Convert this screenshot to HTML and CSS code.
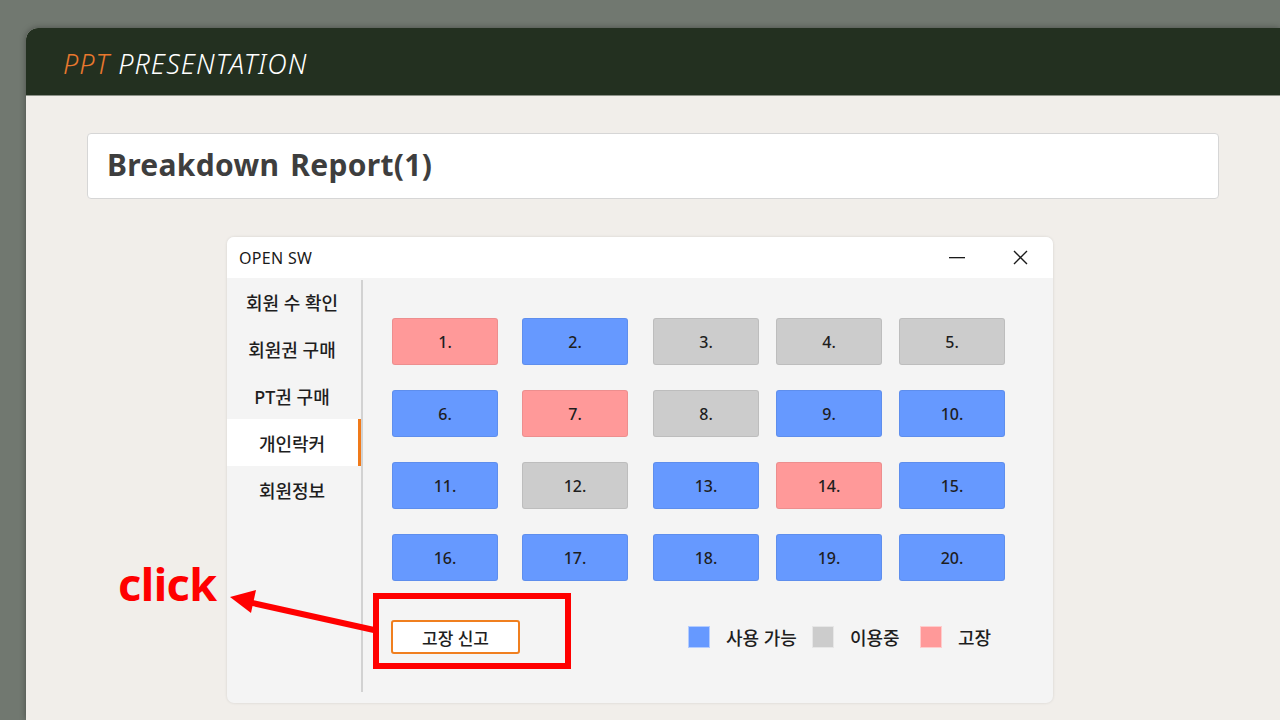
FILE: index.html
```html
<!DOCTYPE html>
<html lang="ko">
<head>
<meta charset="utf-8">
<title>PPT PRESENTATION</title>
<link rel="stylesheet" href="styles.css">
</head>
<body>
<div class="slide">
  <header class="slide-header">
    <h1 class="brand"><span class="brand-accent">PPT</span> PRESENTATION</h1>
  </header>
  <main class="slide-body">
    <div class="title-card">
      <h2 class="title">Breakdown Report(1)</h2>
    </div>
    <section class="window">
      <div class="titlebar">
        <span class="app-name">OPEN SW</span>
        <div class="controls">
          <svg class="ctl-min" width="16" height="2" viewBox="0 0 16 2"><rect x="0" y="0" width="16" height="1.3" fill="#1a1a1a"/></svg>
          <svg class="ctl-close" width="15" height="15" viewBox="0 0 15 15"><path d="M1 1 L14 14 M14 1 L1 14" stroke="#1a1a1a" stroke-width="1.4" fill="none"/></svg>
        </div>
      </div>
      <div class="win-body">
        <nav class="sidebar">
          <div class="nav-item">회원 수 확인</div>
          <div class="nav-item">회원권 구매</div>
          <div class="nav-item">PT권 구매</div>
          <div class="nav-item active">개인락커</div>
          <div class="nav-item">회원정보</div>
        </nav>
        <div class="divider"></div>
        <div class="main">
          <div class="locker-grid">
            <div class="locker broken">1.</div>
            <div class="locker free">2.</div>
            <div class="locker used">3.</div>
            <div class="locker used">4.</div>
            <div class="locker used">5.</div>
            <div class="locker free">6.</div>
            <div class="locker broken">7.</div>
            <div class="locker used">8.</div>
            <div class="locker free">9.</div>
            <div class="locker free">10.</div>
            <div class="locker free">11.</div>
            <div class="locker used">12.</div>
            <div class="locker free">13.</div>
            <div class="locker broken">14.</div>
            <div class="locker free">15.</div>
            <div class="locker free">16.</div>
            <div class="locker free">17.</div>
            <div class="locker free">18.</div>
            <div class="locker free">19.</div>
            <div class="locker free">20.</div>
          </div>
          <div class="bottom-row">
            <button class="report-btn">고장 신고</button>
            <div class="legend">
              <span class="swatch free"></span><span class="legend-label l1">사용 가능</span>
              <span class="swatch used"></span><span class="legend-label l2">이용중</span>
              <span class="swatch broken"></span><span class="legend-label">고장</span>
            </div>
          </div>
        </div>
      </div>
    </section>
  </main>
</div>

<div class="annot-box"></div>
<svg class="annot-arrow" width="1280" height="720" viewBox="0 0 1280 720">
  <line x1="248" y1="602" x2="374" y2="630" stroke="#ff0000" stroke-width="6"/>
  <polygon points="230,597 256,590 251,613" fill="#ff0000"/>
</svg>
<div class="annot-text">click</div>
</body>
</html>
```

FILE: styles.css
```css
* { box-sizing: border-box; }

html, body {
  margin: 0;
  padding: 0;
  width: 1280px;
  height: 720px;
  overflow: hidden;
}

body {
  background: #717870;
  font-family: "Noto Sans", "Noto Sans CJK KR", sans-serif;
  color: #1e1e1e;
}

.slide {
  margin: 28px 0 0 26px;
  height: 692px;
  background: #f1eeea;
  border-top-left-radius: 12px;
  overflow: hidden;
  box-shadow: 0 0 6px rgba(0, 0, 0, 0.35);
}

.slide-header {
  height: 68px;
  background: #233020;
  border-bottom: 1px solid #8d9289;
  display: flex;
  align-items: center;
  padding-left: 37px;
  padding-top: 4px;
}

.brand {
  margin: 0;
  font-size: 27px;
  font-weight: 300;
  font-style: italic;
  color: #ffffff;
  letter-spacing: 1.1px;
  line-height: 1;
}

.brand-accent { color: #e8782e; }

.slide-body {
  padding: 37px 61px 0 61px;
}

.title-card {
  height: 66px;
  background: #ffffff;
  border: 1px solid #d6d6d6;
  border-radius: 4px;
  display: flex;
  align-items: center;
  padding-left: 19px;
}

.title {
  margin: 0;
  font-size: 30px;
  font-weight: 700;
  color: #3e3e3e;
  line-height: 1;
  letter-spacing: 0.3px;
  word-spacing: 3px;
  padding-bottom: 2px;
}

.window {
  margin: 38px 0 0 140px;
  width: 826px;
  height: 466px;
  background: #f4f4f4;
  border-radius: 7px;
  overflow: hidden;
  box-shadow: 0 0 3px rgba(0, 0, 0, 0.12);
}

.titlebar {
  height: 41px;
  background: #ffffff;
  display: flex;
  align-items: center;
  justify-content: space-between;
  padding: 0 25px 0 12px;
}

.app-name {
  font-size: 16px;
  color: #1a1a1a;
  letter-spacing: 0.3px;
}

.controls {
  display: flex;
  align-items: center;
  gap: 48px;
}

.ctl-min { margin-top: 1px; }

.win-body {
  display: flex;
  height: 425px;
}

.sidebar {
  width: 134px;
  display: flex;
  flex-direction: column;
}

.nav-item {
  height: 47px;
  display: flex;
  align-items: center;
  justify-content: center;
  font-size: 18px;
  font-weight: 500;
  color: #1e1e1e;
  padding-right: 4px;
}

.nav-item.active {
  background: #ffffff;
  border-right: 3px solid #f07a1a;
  padding-right: 1px;
}

.divider {
  width: 2px;
  background: #d2d2d2;
  margin: 2px 0 11px 0;
}

.main {
  flex: 1;
  padding: 40px 0 0 29px;
}

.locker-grid {
  display: grid;
  grid-template-columns: 130px 131px 123px 123px 106px;
  grid-auto-rows: 47px;
  row-gap: 25px;
}

.locker {
  width: 106px;
  height: 47px;
  border-radius: 3px;
  border: 1px solid rgba(0, 0, 0, 0.07);
  display: flex;
  align-items: center;
  justify-content: center;
  font-size: 16px;
  font-weight: 500;
  color: #1e1e1e;
}

.free { background: #6699ff; }
.used { background: #cccccc; }
.broken { background: #ff9999; }

.bottom-row {
  margin-top: 39px;
  display: flex;
  align-items: center;
}

.report-btn {
  width: 129px;
  height: 34px;
  background: #ffffff;
  border: 2px solid #f07f1f;
  border-radius: 3px;
  font-family: "Noto Sans", "Noto Sans CJK KR", sans-serif;
  font-size: 17px;
  font-weight: 500;
  color: #1e1e1e;
  padding: 0;
  margin-left: -1px;
}

.legend {
  display: flex;
  align-items: center;
  margin-left: 168px;
}

.swatch {
  width: 22px;
  height: 22px;
  border: 1px solid rgba(255, 255, 255, 0.5);
  margin-right: 16px;
}

.legend-label {
  font-size: 18px;
  font-weight: 500;
  color: #1e1e1e;
}

.legend-label.l1 { width: 86px; }
.legend-label.l2 { width: 70px; }

.annot-box {
  position: absolute;
  left: 373px;
  top: 593px;
  width: 198px;
  height: 76px;
  border: 6px solid #ff0000;
}

.annot-arrow {
  position: absolute;
  left: 0;
  top: 0;
  pointer-events: none;
}

.annot-text {
  position: absolute;
  left: 118px;
  top: 555px;
  font-family: "Noto Sans", sans-serif;
  font-size: 45px;
  font-weight: 700;
  color: #ff0000;
  line-height: 1.3;
  letter-spacing: -0.5px;
}
```
